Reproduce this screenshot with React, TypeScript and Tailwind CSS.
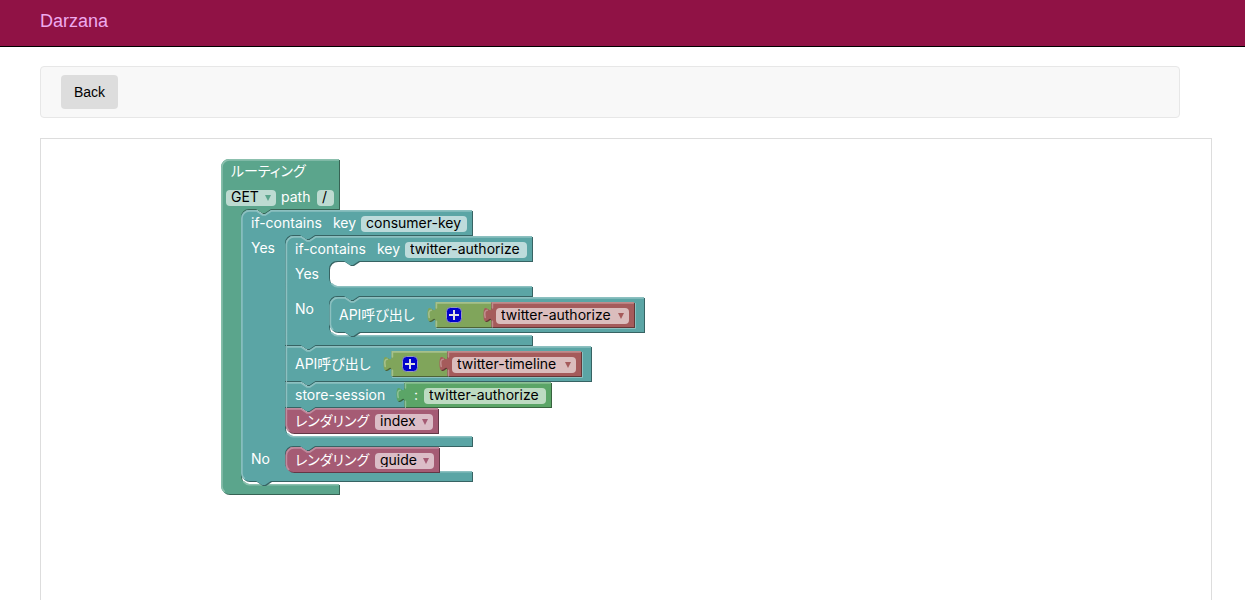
import type { ReactNode } from "react";

const notchRight = "l 6,4 3,0 6,-4";
const notchLeft = "l -6,4 -3,0 -6,-4";

type Cavity = { x: number; y: number; h: number };

type Shape = {
  x: number;
  y: number;
  w: number;
  h: number;
  color: string;
  light: string;
  dark: string;
  roundTop?: boolean;
  roundBottom?: boolean;
  notchTop?: boolean;
  notchBottom?: boolean;
  tab?: boolean;
  cavities?: Cavity[];
};

const teal = { color: "#5ba5a5", light: "#8cc0c0", dark: "#376363" };
const jade = { color: "#5ba58c", light: "#8cc0ae", dark: "#376354" };
const olive = { color: "#80a55b", light: "#a6c08c", dark: "#4d6337" };
const red = { color: "#a55b5b", light: "#c08c8c", dark: "#633737" };
const green = { color: "#5ba567", light: "#8cc095", dark: "#37633e" };
const plum = { color: "#a55b74", light: "#c08c9e", dark: "#633746" };

const shapes: Shape[] = [
  { x: 0, y: 0, w: 118, h: 335, ...jade, roundTop: true, roundBottom: true, cavities: [{ x: 20, y: 50, h: 275 }] },
  {
    x: 20, y: 51, w: 231, h: 271, ...teal, roundTop: true, roundBottom: true, notchTop: true, notchBottom: true,
    cavities: [{ x: 44, y: 25, h: 201 }, { x: 44, y: 236, h: 25 }],
  },
  {
    x: 64.5, y: 77, w: 246.5, h: 109, ...teal, roundTop: true, notchTop: true, notchBottom: true,
    cavities: [{ x: 43.5, y: 25, h: 25 }, { x: 43.5, y: 60, h: 39 }],
  },
  { x: 108.5, y: 138, w: 314.5, h: 35, ...teal, roundTop: true, roundBottom: true, notchTop: true, notchBottom: true },
  { x: 214.5, y: 143, w: 55.5, h: 25, ...olive, tab: true },
  { x: 270.5, y: 143, w: 142.5, h: 25, ...red, tab: true },
  { x: 64.5, y: 187, w: 305.5, h: 35, ...teal, notchTop: true, notchBottom: true },
  { x: 170.5, y: 192, w: 55.5, h: 25, ...olive, tab: true },
  { x: 226.5, y: 192, w: 133.5, h: 25, ...red, tab: true },
  { x: 64.5, y: 223, w: 118.5, h: 25, ...teal, notchTop: true, notchBottom: true },
  { x: 183.5, y: 223, w: 146.5, h: 25, ...green, tab: true },
  { x: 64.5, y: 249, w: 152.5, h: 25, ...plum, notchTop: true, roundBottom: true },
  { x: 64.5, y: 288, w: 153.5, h: 25, ...plum, notchTop: true, roundTop: true, roundBottom: true },
];

function outline(s: Shape) {
  const top = s.roundTop ? "M 0,8 A 8,8 0 0,1 8,0" : "M 0,0";
  const notch = s.notchTop ? `H 15 ${notchRight}` : "";
  const cavities = (s.cavities ?? [])
    .map((c) => `V ${c.y} H ${c.x + 30} ${notchLeft} h -7 a 8,8 0 0,0 -8,8 v ${c.h - 16} a 8,8 0 0,0 8,8 H ${s.w}`)
    .join(" ");
  const bottom = s.notchBottom ? `H 30 ${notchLeft}` : "";
  const corner = s.roundBottom ? "H 8 a 8,8 0 0,1 -8,-8" : "H 0";
  const tab = s.tab ? "V 20 c 0,-10 -8,8 -8,-7.5 s 8,2.5 8,-7.5" : "";
  return `${top} ${notch} H ${s.w} ${cavities} V ${s.h} ${bottom} ${corner} ${tab} Z`;
}

function highlight(s: Shape) {
  const left = s.tab
    ? `M 0.5,${s.h - 1} V 19 M -6.7,15 q -1.5,-7 2,-7.2 M 0.5,5.5 V 0.5`
    : `M ${s.roundBottom ? "2.8" : "0.5"},${s.roundBottom ? s.h - 3 : s.h - 1} ${
        s.roundBottom ? `A 7.5,7.5 0 0,1 0.5,${s.h - 8}` : ""
      } V ${s.roundTop ? 8 : 0.5}`;
  const top = s.roundTop ? "A 7.5,7.5 0 0,1 8,0.5" : "";
  const notch = s.notchTop ? `H 15 ${notchRight}` : "";
  const cavities = (s.cavities ?? [])
    .map((c) => `M ${c.x + 2.5},${c.y + c.h - 2.5} A 8.5,8.5 0 0,0 ${c.x + 8},${c.y + c.h + 0.3} H ${s.w - 1}`)
    .join(" ");
  return `${left} ${top} ${notch} H ${s.w - 1} ${cavities}`;
}

function BlockShapes() {
  return (
    <svg className="absolute left-0 top-0 overflow-visible" width="440" height="340" aria-hidden="true">
      {shapes.map((s, i) => (
        <g key={i} transform={`translate(${s.x},${s.y})`}>
          <path d={outline(s)} fill={s.dark} transform="translate(1,1)" />
          <path d={outline(s)} fill={s.color} />
          <path
            d={highlight(s)}
            fill="none"
            stroke={s.light}
            strokeWidth="1.6"
            strokeLinecap="round"
            transform="translate(0.4,0.4)"
          />
        </g>
      ))}
      <path d="M 414.5,144 V 169.5 H 215" fill="none" stroke={teal.light} />
      <path d="M 361.5,193 V 218.5 H 171" fill="none" stroke={teal.light} />
    </svg>
  );
}

function Row({ className, children }: { className: string; children: ReactNode }) {
  return (
    <div className={`absolute flex h-4 items-start whitespace-nowrap leading-[14px] text-white ${className}`}>
      {children}
    </div>
  );
}

function TextField({ label, value, className }: { label: string; value: string; className: string }) {
  return (
    <input
      aria-label={label}
      defaultValue={value}
      className={`h-4 rounded bg-white/60 px-[5px] pb-1 leading-[14px] text-black outline-none ${className}`}
    />
  );
}

function Dropdown({ label, value, className, arrow }: { label: string; value: string; className: string; arrow: string }) {
  return (
    <span className={`relative flex h-4 ${className}`}>
      <select
        aria-label={label}
        defaultValue={value}
        className="h-4 w-full appearance-none rounded bg-white/60 pb-0.5 pl-[5px] leading-[14px] text-black outline-none"
      >
        <option>{value}</option>
      </select>
      <svg
        className={`pointer-events-none absolute right-[5px] top-[5px] ${arrow}`}
        width="6"
        height="6"
        viewBox="0 0 6 6"
        fill="currentColor"
      >
        <path d="M0 0H6L3 6Z" />
      </svg>
    </span>
  );
}

function MutatorButton({ className }: { className: string }) {
  return (
    <button type="button" aria-label="Edit parameters" className={`absolute size-4 ${className}`}>
      <svg width="16" height="16" viewBox="0 0 16 16">
        <rect x="0.5" y="0.5" width="15" height="15" rx="4" fill="#00c" stroke="#99b" />
        <path d="M8 3V13M3 8H13" stroke="#ddd" strokeWidth="2" />
      </svg>
    </button>
  );
}

export default function App() {
  return (
    <div className="flex h-screen flex-col overflow-hidden bg-white font-['Liberation_Sans',Arial,sans-serif] text-sm">
      <header className="h-[47px] shrink-0 border-b border-black bg-[#901245] pl-10">
        <a href="#" className="text-lg leading-[42px] text-[#eeaaee]">
          Darzana
        </a>
      </header>
      <main className="flex flex-1 flex-col pl-10 pt-[19px]">
        <nav className="mr-[65px] flex h-[52px] shrink-0 items-center rounded border border-[#e7e7e7] bg-[#f8f8f8] pl-5">
          <button type="button" className="h-[34px] rounded bg-[#ddd] px-[13px] text-black">
            Back
          </button>
        </nav>
        <section className="mr-[33px] mt-5 flex-1 border border-b-0 border-[#ddd] pl-[180px] pt-5">
          <div className="relative font-['Inter','Noto_Sans_CJK_JP',sans-serif] text-sm [font-feature-settings:'palt']">
            <BlockShapes />
            <Row className="left-[10px] top-[5px]">ルーティング</Row>
            <Row className="left-[5px] top-[31px] gap-[5px]">
              <Dropdown label="method" value="GET" className="w-[50px]" arrow="text-[#5ba58c]" />
              <span className="w-[31px]">path</span>
              <TextField label="path" value="/" className="w-[17px]" />
            </Row>
            <Row className="left-[30px] top-[57px]">
              <span className="w-[82px]">if-contains</span>
              <span className="w-7">key</span>
              <TextField label="key" value="consumer-key" className="w-[106px]" />
            </Row>
            <Row className="left-[30px] top-[82px]">Yes</Row>
            <Row className="left-[74px] top-[83px]">
              <span className="w-[82px]">if-contains</span>
              <span className="w-7">key</span>
              <TextField label="key" value="twitter-authorize" className="w-[122px]" />
            </Row>
            <Row className="left-[74px] top-[108px]">Yes</Row>
            <Row className="left-[74px] top-[143px]">No</Row>
            <Row className="left-[118px] top-[149px]">
              <span className="w-[157px]">API呼び出し</span>
              <Dropdown label="API" value="twitter-authorize" className="w-[133px]" arrow="text-[#a55b5b]" />
            </Row>
            <MutatorButton className="left-[225px] top-[148px]" />
            <Row className="left-[74px] top-[198px]">
              <span className="w-[157px]">API呼び出し</span>
              <Dropdown label="API" value="twitter-timeline" className="w-[124px]" arrow="text-[#a55b5b]" />
            </Row>
            <MutatorButton className="left-[181px] top-[197px]" />
            <Row className="left-[74px] top-[229px]">
              <span className="w-[119px]">store-session</span>
              <span className="w-[10px]">:</span>
              <TextField label="session key" value="twitter-authorize" className="w-[122px]" />
            </Row>
            <Row className="left-[74px] top-[255px]">
              <span className="w-20">レンダリング</span>
              <Dropdown label="template" value="index" className="w-[58px]" arrow="text-[#a55b74]" />
            </Row>
            <Row className="left-[30px] top-[293px]">No</Row>
            <Row className="left-[74px] top-[294px]">
              <span className="w-20">レンダリング</span>
              <Dropdown label="template" value="guide" className="w-[59px]" arrow="text-[#a55b74]" />
            </Row>
          </div>
        </section>
      </main>
    </div>
  );
}
